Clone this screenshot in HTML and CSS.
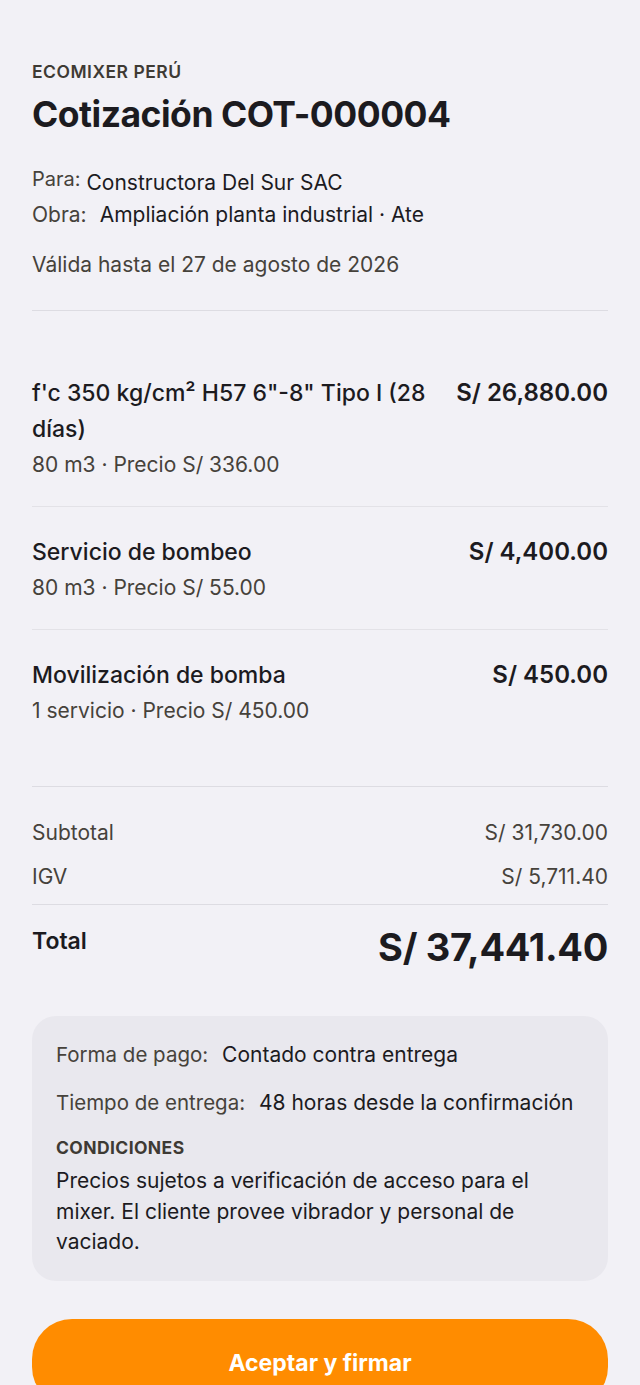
FILE: index.html
```html
<!DOCTYPE html>
<html lang="es">

<head>
  <meta charset="UTF-8">
  <meta name="viewport" content="width=device-width, initial-scale=1.0">
  <title>Cotización COT-000004</title>
  <link rel="stylesheet" href="styles.css">
</head>

<body>
  <main class="quote">
    <header class="quote-head">
      <p class="brand">ECOMIXER PERÚ</p>
      <h1>Cotización COT-000004</h1>

      <div class="client">
        <div class="client-row client-row--top">
          <span class="label">Para:</span>
          <span class="value">Constructora Del Sur SAC</span>
        </div>
        <div class="client-row">
          <span class="label">Obra:</span>
          <span class="value">Ampliación planta industrial · Ate</span>
        </div>
      </div>

      <p class="valid">Válida hasta el 27 de agosto de 2026</p>
    </header>

    <section class="items">
      <div class="item">
        <div class="item-info">
          <h2>f'c 350 kg/cm² H57 6"-8" Tipo I (28 días)</h2>
          <p>80 m3 · Precio S/ 336.00</p>
        </div>
        <span class="item-price">S/ 26,880.00</span>
      </div>
      <div class="item">
        <div class="item-info">
          <h2>Servicio de bombeo</h2>
          <p>80 m3 · Precio S/ 55.00</p>
        </div>
        <span class="item-price">S/ 4,400.00</span>
      </div>
      <div class="item">
        <div class="item-info">
          <h2>Movilización de bomba</h2>
          <p>1 servicio · Precio S/ 450.00</p>
        </div>
        <span class="item-price">S/ 450.00</span>
      </div>
    </section>

    <section class="totals">
      <div class="sums">
        <div class="sum-row"><span>Subtotal</span><span>S/ 31,730.00</span></div>
        <div class="sum-row"><span>IGV</span><span>S/ 5,711.40</span></div>
      </div>
      <div class="grand">
        <span class="grand-label">Total</span>
        <span class="grand-value">S/ 37,441.40</span>
      </div>
    </section>

    <section class="terms">
      <p class="term"><span class="label">Forma de pago:</span> Contado contra entrega</p>
      <p class="term"><span class="label">Tiempo de entrega:</span> 48 horas desde la confirmación</p>
      <h3>CONDICIONES</h3>
      <p class="conditions">Precios sujetos a verificación de acceso para el mixer. El cliente provee vibrador y personal de vaciado.</p>
    </section>

    <button class="accept">Aceptar y firmar</button>
  </main>
</body>

</html>
```

FILE: styles.css
```css
* {
  margin: 0;
  box-sizing: border-box;
}

body {
  font-family: Inter, "Noto Sans", sans-serif;
  background: #f2f1f6;
  color: #1c1b1f;
}

.quote {
  padding: 60px 32px 0;
}

.brand {
  font-size: 17.5px;
  font-weight: 600;
  letter-spacing: .5px;
  color: #3e3a34;
  line-height: 24px;
}

h1 {
  font-size: 35.5px;
  font-weight: 700;
  letter-spacing: -.5px;
  line-height: 44px;
  margin-top: 9px;
}

.client {
  margin-top: 30px;
}

.client-row {
  display: flex;
  align-items: baseline;
  font-size: 21px;
  line-height: 32px;
}

.client-row .label {
  color: #46423b;
  margin-right: 13px;
}

.client-row--top {
  align-items: flex-start;
}

.client-row--top .label {
  font-size: 20px;
  line-height: 24px;
  margin-right: 6px;
}

.valid {
  margin-top: 18px;
  font-size: 21px;
  line-height: 32px;
  color: #46423b;
  padding-bottom: 29px;
  border-bottom: 1px solid #dddce2;
}

.items {
  padding: 37px 0 34px;
  border-bottom: 1px solid #dddce2;
}

.item {
  display: flex;
  justify-content: space-between;
  gap: 24px;
  padding: 27px 0;
}

.item + .item {
  border-top: 1px solid #e3e2e7;
}

.item h2 {
  font-size: 23px;
  font-weight: 500;
  line-height: 36px;
}

.item p {
  margin-top: 4px;
  font-size: 21px;
  line-height: 28px;
  color: #46423b;
}

.item-price {
  font-size: 24px;
  font-weight: 600;
  line-height: 36px;
  white-space: nowrap;
}

.sums {
  padding: 32px 0 13px;
  border-bottom: 1px solid #dddce2;
  display: flex;
  flex-direction: column;
  gap: 16px;
}

.sum-row {
  display: flex;
  justify-content: space-between;
  font-size: 21px;
  line-height: 28px;
  color: #46423b;
}

.grand {
  display: flex;
  justify-content: space-between;
  align-items: flex-start;
  padding-top: 20px;
}

.grand-label {
  margin-top: 1px;
  font-size: 23px;
  font-weight: 600;
  line-height: 30px;
}

.grand-value {
  font-size: 38px;
  font-weight: 700;
  line-height: 44px;
  letter-spacing: -.3px;
}

.terms {
  margin-top: 47px;
  background: #e9e8ee;
  border-radius: 24px;
  padding: 24px 24px 23px;
}

.term {
  font-size: 21px;
  line-height: 30px;
  color: #1c1b1f;
}

.term + .term {
  margin-top: 18px;
}

.term .label {
  font-size: 20.5px;
  color: #46423b;
  margin-right: 8px;
}

.terms h3 {
  margin-top: 17px;
  font-size: 17.5px;
  font-weight: 700;
  letter-spacing: .4px;
  color: #3e3a34;
  line-height: 26px;
}

.conditions {
  margin-top: 5px;
  font-size: 21px;
  line-height: 30.5px;
}

.accept {
  display: block;
  width: 100%;
  margin-top: 38px;
  height: 88px;
  border: none;
  border-radius: 40px;
  background: #ff8c00;
  color: #fff;
  font-family: inherit;
  font-size: 23px;
  font-weight: 700;
}
```
